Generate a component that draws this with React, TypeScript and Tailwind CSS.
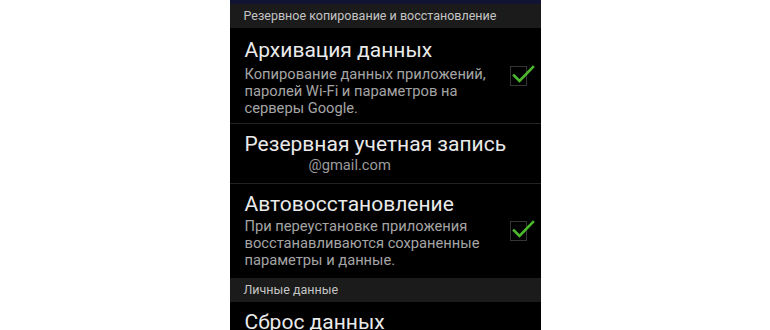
import React from 'react';

const Check: React.FC = () => (
  <div className="relative w-[24px] h-[22px] shrink-0 self-center mr-[7px]">
    <div className="absolute left-0 top-[1px] w-[17px] h-[20px] border border-[#353535]" />
    <svg className="absolute left-0 top-0" width="25" height="22" viewBox="0 0 25 22">
      <path d="M4 10.5 L9.5 16 L23 2" fill="none" stroke="#4cb82c" strokeWidth="2.6" strokeLinecap="square" />
    </svg>
  </div>
);

const SectionHeader: React.FC<{ label: string }> = ({ label }) => (
  <div className="h-[24px] shrink-0 bg-[#1b1b1b] flex items-center pl-[14px] text-[12.5px] text-[#c4c4c4]">
    {label}
  </div>
);

const Divider = () => <div className="h-px shrink-0 bg-[#222222]" />;

export default function App() {
  return (
    <div className="w-[770px] h-[330px] bg-white flex justify-center overflow-hidden" style={{ fontFamily: 'Roboto, "Noto Sans", sans-serif' }}>
      <div className="w-[311px] h-[330px] bg-black flex flex-col overflow-hidden">
        <div className="h-[4px] shrink-0 bg-[#111433]" />
        <SectionHeader label="Резервное копирование и восстановление" />

        <div className="h-[95px] shrink-0 flex items-start pl-[15px]">
          <div className="flex-1 pt-[10px]">
            <div className="text-[21px] leading-[24px] text-[#eaeaea]">Архивация данных</div>
            <div className="mt-[4px] text-[14.7px] leading-[17px] text-[#a5a5a5]">
              <div>Копирование данных приложений,</div>
              <div>паролей Wi-Fi и параметров на</div>
              <div>серверы Google.</div>
            </div>
          </div>
          <Check />
        </div>
        <Divider />

        <div className="h-[59px] shrink-0 pl-[15px] pt-[9px]">
          <div className="text-[21px] leading-[22px] text-[#eaeaea]">Резервная учетная запись</div>
          <div className="mt-[3px] pl-[64px] text-[14.7px] leading-[14px] text-[#9c9c9c]">@gmail.com</div>
        </div>
        <Divider />

        <div className="h-[94px] shrink-0 flex items-start pl-[15px]">
          <div className="flex-1 pt-[8px]">
            <div className="text-[21px] leading-[24px] text-[#eaeaea]">Автовосстановление</div>
            <div className="mt-[2px] text-[14.7px] leading-[17px] text-[#a5a5a5]">
              <div>При переустановке приложения</div>
              <div>восстанавливаются сохраненные</div>
              <div>параметры и данные.</div>
            </div>
          </div>
          <Check />
        </div>

        <SectionHeader label="Личные данные" />

        <div className="shrink-0 pl-[15px] pt-[8px]">
          <div className="text-[21px] leading-[24px] text-[#eaeaea]">Сброс данных</div>
        </div>
      </div>
    </div>
  );
}
